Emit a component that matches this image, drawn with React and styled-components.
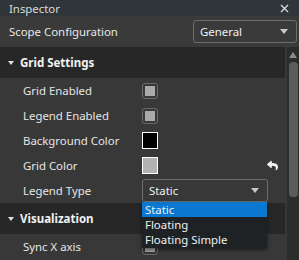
import styled, { createGlobalStyle } from 'styled-components';
import { FaReply } from 'react-icons/fa';

const GlobalStyle = createGlobalStyle`
  html, body {
    margin: 0;
    padding: 0;
    background: #383838;
  }
  body {
    font-family: "Noto Sans", "Open Sans", sans-serif;
    font-size: 11.4px;
    color: #e8e8e8;
  }
`;

const Panel = styled.div`
  width: 299px;
  height: 260px;
  overflow: hidden;
  background: #383838;
  position: relative;
`;

const TitleBar = styled.div`
  height: 16px;
  display: flex;
  align-items: center;
  justify-content: space-between;
  padding: 0 10px 0 9px;
  background: #2f3538;
  color: #dcdcdc;
`;

const CloseIcon = () => (
  <svg width="9" height="9" viewBox="0 0 9 9">
    <path d="M1 1 L8 8 M8 1 L1 8" stroke="#d8d8d8" strokeWidth="1.4" />
  </svg>
);

const ScopeRow = styled.div`
  height: 31px;
  display: flex;
  align-items: center;
  justify-content: space-between;
  padding: 0 2px 0 9px;
  background: #3a3a3a;
`;

const Select = styled.div`
  box-sizing: border-box;
  width: ${(p) => p.w}px;
  height: 23px;
  display: flex;
  align-items: center;
  justify-content: space-between;
  padding: 0 8px 0 6px;
  border: 1px solid #6c6c6c;
  border-radius: 3px;
  color: #f0f0f0;
  position: relative;
`;

const Caret = styled.span`
  width: 0;
  height: 0;
  border-left: 4px solid transparent;
  border-right: 4px solid transparent;
  border-top: 5px solid #c8c8c8;
`;

const Body = styled.div`
  display: flex;
  height: 213px;
`;

const Content = styled.div`
  width: 285px;
  display: flex;
  flex-direction: column;
`;

const SectionHeader = styled.div`
  height: 31px;
  display: flex;
  align-items: center;
  gap: 6px;
  padding-left: 8px;
  background: #272727;
  font-weight: 700;
  font-size: 11.5px;
  color: #f2f2f2;
`;

const HeaderCaret = styled.span`
  width: 0;
  height: 0;
  border-left: 3.5px solid transparent;
  border-right: 3.5px solid transparent;
  border-top: 4px solid #e0e0e0;
`;

const Row = styled.div`
  height: 25px;
  display: grid;
  grid-template-columns: 119px 1fr auto;
  align-items: center;
  padding-left: 23px;
  padding-right: 4px;
  color: #e6e6e6;
`;

const Checkbox = styled.span`
  box-sizing: border-box;
  width: 16px;
  height: 16px;
  border: 1.5px solid #6a6a6a;
  border-radius: 3px;
  padding: 2px;
  display: flex;
  span {
    flex: 1;
    background: #a9a9a9;
  }
`;

const Swatch = styled.span`
  box-sizing: border-box;
  width: 16px;
  height: 17px;
  border: 1px solid #ffffff;
  background: ${(p) => p.color};
`;

const ResetIcon = styled(FaReply)`
  color: #f0f0f0;
  font-size: 11px;
  margin-right: 3px;
`;

const Scrollbar = styled.div`
  width: 12px;
  margin-left: 2px;
  background: #2c2c2c;
  display: flex;
  flex-direction: column;
  align-items: center;
  padding-top: 5px;
  gap: 4px;
`;

const ScrollArrow = styled.span`
  width: 0;
  height: 0;
  border-left: 4px solid transparent;
  border-right: 4px solid transparent;
  border-bottom: 6px solid #8c8c8c;
`;

const Thumb = styled.span`
  width: 9px;
  height: 135px;
  border-radius: 4px;
  background: #5c5c5c;
`;

const Popup = styled.div`
  position: absolute;
  left: -1px;
  top: 22px;
  width: 125px;
  padding: 0 0 1px;
  background: #1f2225;
  box-shadow: 0 2px 4px rgba(0, 0, 0, 0.5);
  z-index: 5;
`;

const Option = styled.div`
  height: 15px;
  line-height: 15px;
  padding-left: 3px;
  color: #f0f0f0;
  background: ${(p) => (p.active ? '#0a78d0' : 'transparent')};
`;

export default function App() {
  return (
    <>
      <GlobalStyle />
      <Panel>
        <TitleBar>
          <span>Inspector</span>
          <CloseIcon />
        </TitleBar>
        <ScopeRow>
          <span>Scope Configuration</span>
          <Select w={104}>
            <span>General</span>
            <Caret />
          </Select>
        </ScopeRow>
        <Body>
          <Content>
            <SectionHeader>
              <HeaderCaret />
              <span>Grid Settings</span>
            </SectionHeader>
            <Row>
              <span>Grid Enabled</span>
              <Checkbox><span /></Checkbox>
            </Row>
            <Row>
              <span>Legend Enabled</span>
              <Checkbox><span /></Checkbox>
            </Row>
            <Row>
              <span>Background Color</span>
              <Swatch color="#000000" />
            </Row>
            <Row>
              <span>Grid Color</span>
              <Swatch color="#b3b3b3" />
              <ResetIcon />
            </Row>
            <Row>
              <span>Legend Type</span>
              <Select w={126}>
                <span>Static</span>
                <Caret />
                <Popup>
                  <Option active>Static</Option>
                  <Option>Floating</Option>
                  <Option>Floating Simple</Option>
                </Popup>
              </Select>
            </Row>
            <SectionHeader>
              <HeaderCaret />
              <span>Visualization</span>
            </SectionHeader>
            <Row>
              <span>Sync X axis</span>
              <Checkbox><span /></Checkbox>
            </Row>
          </Content>
          <Scrollbar>
            <ScrollArrow />
            <Thumb />
          </Scrollbar>
        </Body>
      </Panel>
    </>
  );
}
